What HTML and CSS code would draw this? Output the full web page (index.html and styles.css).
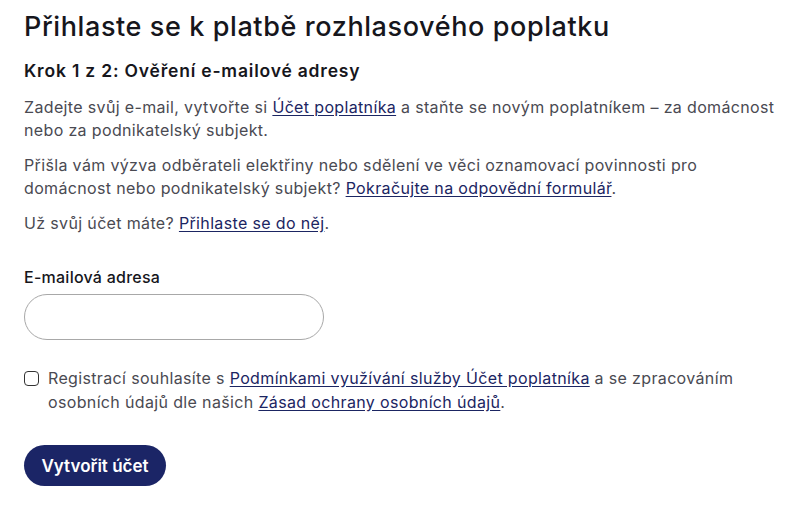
FILE: index.html
```html
<!DOCTYPE html>
<html lang="cs">
<head>
<meta charset="utf-8">
<title>Přihlaste se k platbě rozhlasového poplatku</title>
<link rel="stylesheet" href="styles.css">
</head>
<body>
<main class="page">
  <h1 class="title">Přihlaste se k platbě rozhlasového poplatku</h1>
  <h2 class="step">Krok 1 z 2: Ověření e-mailové adresy</h2>
  <p class="text">Zadejte svůj e-mail, vytvořte si <a href="#">Účet poplatníka</a> a staňte se novým poplatníkem – za domácnost nebo za podnikatelský subjekt.</p>
  <p class="text">Přišla vám výzva odběrateli elektřiny nebo sdělení ve věci oznamovací povinnosti pro domácnost nebo podnikatelský subjekt? <a href="#">Pokračujte na odpovědní formulář</a>.</p>
  <p class="text">Už svůj účet máte? <a href="#">Přihlaste se do něj</a>.</p>
  <form class="form">
    <label class="field">
      <span class="label">E-mailová adresa</span>
      <input class="input" type="email">
    </label>
    <label class="consent">
      <input class="check" type="checkbox">
      <span class="consent-text">Registrací souhlasíte s <a href="#">Podmínkami využívání služby Účet poplatníka</a> a se zpracováním osobních údajů dle našich <a href="#">Zásad ochrany osobních údajů</a>.</span>
    </label>
    <button class="btn" type="button">Vytvořit účet</button>
  </form>
</main>
</body>
</html>
```

FILE: styles.css
```css
* { box-sizing: border-box; }
body {
  margin: 0;
  background: #fff;
  font-family: Inter, "Liberation Sans", sans-serif;
  color: #4a4a52;
}
.page {
  padding: 10px 6px 0 24px;
  width: 790px;
}
.title {
  margin: 0;
  font-size: 27px;
  line-height: 34px;
  font-weight: 500;
  letter-spacing: 0.6px;
  color: #16161c;
}
.step {
  margin: 15px 0 0;
  font-size: 17.5px;
  line-height: 24px;
  font-weight: 600;
  letter-spacing: 0.8px;
  color: #16161c;
}
.text {
  margin: 13px 0 0;
  font-size: 16px;
  line-height: 23px;
  letter-spacing: 0.35px;
}
.text + .text { margin-top: 12px; }
a {
  color: #1b2562;
  text-decoration: underline;
  text-underline-offset: 2px;
}
.form {
  display: flex;
  flex-direction: column;
  align-items: flex-start;
  margin-top: 31px;
}
.field {
  display: flex;
  flex-direction: column;
  gap: 6px;
}
.label {
  font-size: 16px;
  line-height: 22px;
  letter-spacing: 0.25px;
  color: #16161c;
  font-weight: 500;
}
.input {
  width: 300px;
  height: 46px;
  border: 1px solid #a8a8a8;
  border-radius: 23px;
  margin: 0;
  padding: 0 20px;
  font: inherit;
}
.consent {
  display: flex;
  gap: 9px;
  margin-top: 26px;
  font-size: 16px;
  line-height: 24px;
  letter-spacing: 0.35px;
}
.check {
  appearance: none;
  width: 15px;
  height: 15px;
  border: 1.5px solid #333;
  border-radius: 4px;
  margin: 5px 0 0;
  flex: none;
}
.btn {
  margin-top: 31px;
  height: 41px;
  width: 142px;
  padding: 0;
  border: 0;
  border-radius: 21px;
  background: #1b2566;
  color: #fff;
  font: inherit;
  font-size: 17px;
  font-weight: 600;
}
```
